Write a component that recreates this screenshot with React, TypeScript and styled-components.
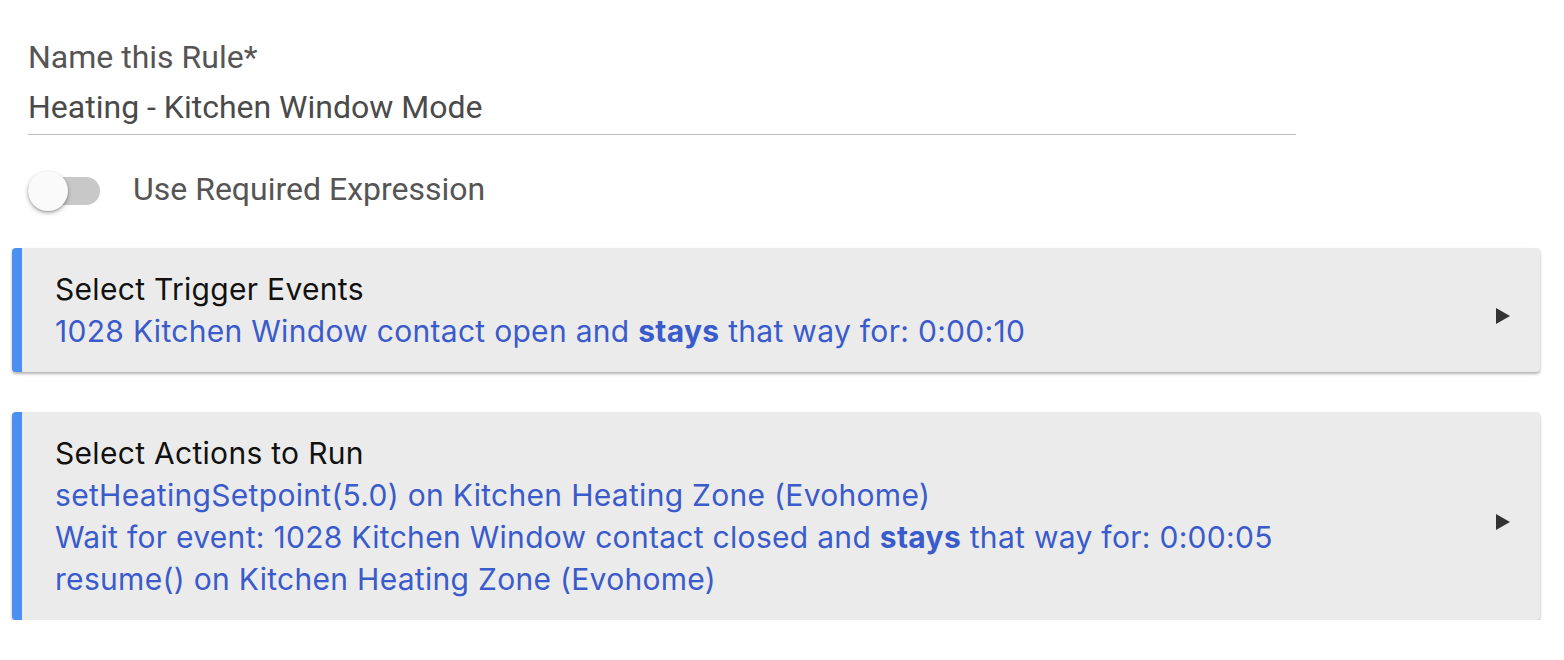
import React from "react";
import styled, { createGlobalStyle } from "styled-components";

const GlobalStyle = createGlobalStyle`
  body {
    margin: 0;
    background: #ffffff;
  }
`;

const Page = styled.div`
  padding: 36px 24px 0 12px;
`;

const Field = styled.div`
  margin-left: 16px;
  width: 1268px;
  border-bottom: 1.5px solid #bdbdbd;
  padding-bottom: 6px;
`;

const FieldLabel = styled.div`
  font-family: Roboto, "Liberation Sans", sans-serif;
  font-size: 32px;
  line-height: 42px;
  color: #555555;
`;

const FieldValue = styled.div`
  font-family: Roboto, "Liberation Sans", sans-serif;
  font-size: 32px;
  line-height: 42px;
  margin-top: 8px;
  color: #4a4a4a;
`;

const SwitchRow = styled.label`
  display: flex;
  align-items: center;
  gap: 33px;
  margin: 40px 0 0 16px;
  font-family: Roboto, "Liberation Sans", sans-serif;
  font-size: 32px;
  line-height: 36px;
  color: #555555;
`;

const SwitchText = styled.span`
  margin-top: -4px;
`;

const Track = styled.span`
  position: relative;
  width: 72px;
  height: 28px;
  border-radius: 14px;
  background: #c8c8c8;
`;

const Knob = styled.span`
  position: absolute;
  left: 0;
  top: -6px;
  width: 40px;
  height: 40px;
  border-radius: 50%;
  background: #fafafa;
  box-shadow: 0 2px 4px rgba(0, 0, 0, 0.3), 0 1px 2px rgba(0, 0, 0, 0.15);
`;

const Cards = styled.div`
  display: flex;
  flex-direction: column;
  gap: 40px;
  margin-top: 41px;
`;

const Card = styled.div`
  display: flex;
  align-items: center;
  background: #ebebeb;
  border-left: 10px solid #4a8ff2;
  border-radius: 4px;
  box-shadow: 0 2px 3px rgba(0, 0, 0, 0.3);
  padding: 20px 30px 20px 33px;
`;

const CardBody = styled.div`
  flex: 1;
  font-family: Inter, "Liberation Sans", sans-serif;
  font-size: 30px;
  letter-spacing: 0.3px;
  line-height: 42px;
`;

const CardTitle = styled.div`
  color: #111111;
`;

const CardLine = styled.div`
  color: #3a5bcb;

  b {
    font-weight: 700;
  }
`;

const Arrow = styled.svg`
  width: 14px;
  height: 16px;
  margin-top: 11px;
  flex-shrink: 0;
`;

const PlayArrow = () => (
  <Arrow viewBox="0 0 14 16">
    <path d="M0 0 L14 8 L0 16 Z" fill="#333333" />
  </Arrow>
);

export default function App() {
  return (
    <>
      <GlobalStyle />
      <Page>
        <Field>
          <FieldLabel>Name this Rule*</FieldLabel>
          <FieldValue>Heating - Kitchen Window Mode</FieldValue>
        </Field>

        <SwitchRow>
          <Track>
            <Knob />
          </Track>
          <SwitchText>Use Required Expression</SwitchText>
        </SwitchRow>

        <Cards>
          <Card>
            <CardBody>
              <CardTitle>Select Trigger Events</CardTitle>
              <CardLine>
                1028 Kitchen Window contact open and <b>stays</b> that way for: 0:00:10
              </CardLine>
            </CardBody>
            <PlayArrow />
          </Card>

          <Card>
            <CardBody>
              <CardTitle>Select Actions to Run</CardTitle>
              <CardLine>setHeatingSetpoint(5.0) on Kitchen Heating Zone (Evohome)</CardLine>
              <CardLine>
                Wait for event: 1028 Kitchen Window contact closed and <b>stays</b> that way for: 0:00:05
              </CardLine>
              <CardLine>resume() on Kitchen Heating Zone (Evohome)</CardLine>
            </CardBody>
            <PlayArrow />
          </Card>
        </Cards>
      </Page>
    </>
  );
}
